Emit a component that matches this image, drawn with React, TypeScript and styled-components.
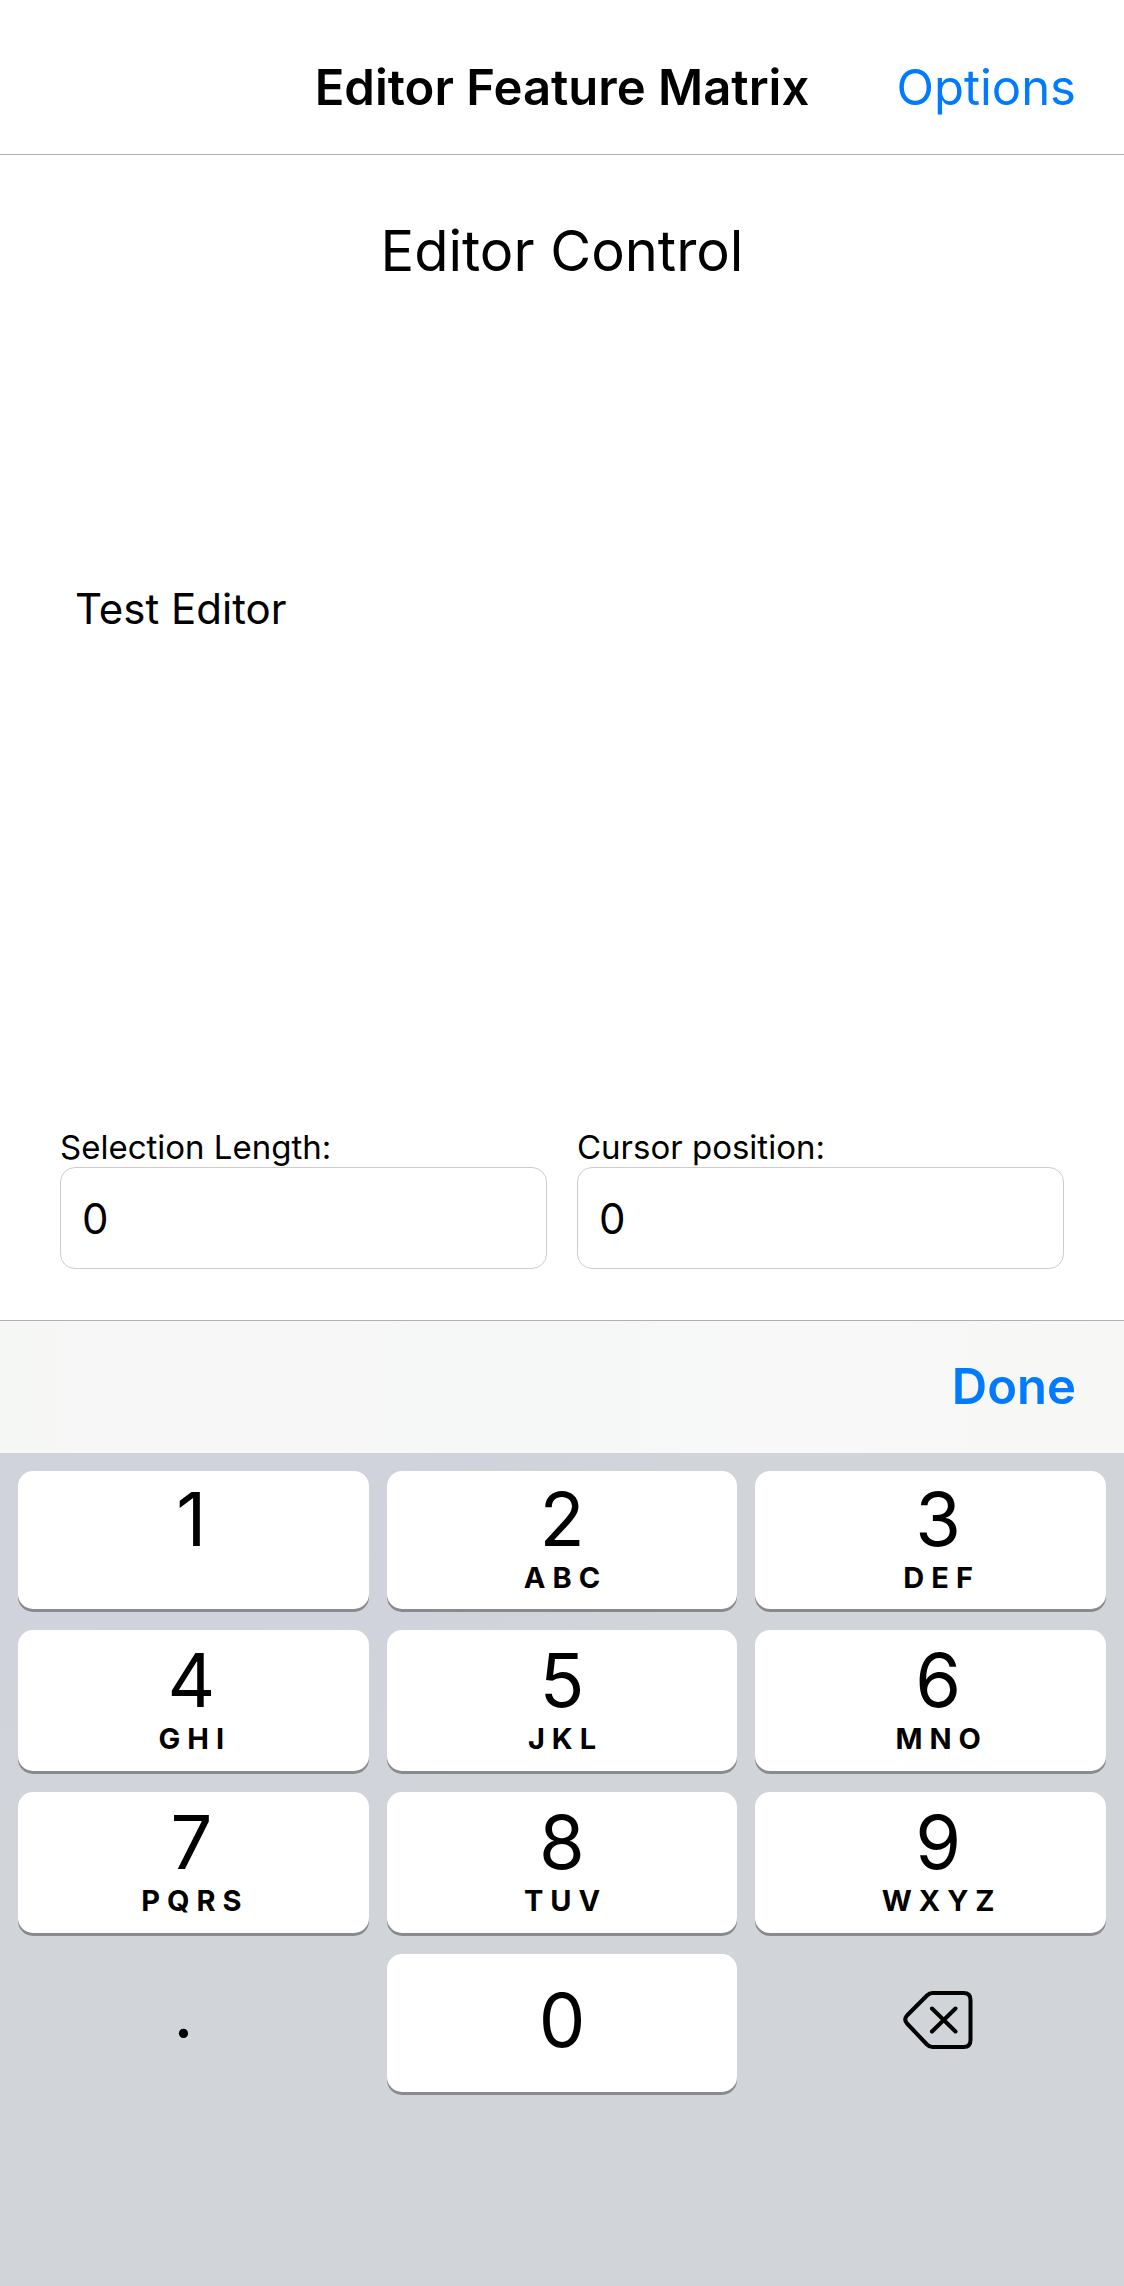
import React, { useState } from "react";
import styled, { createGlobalStyle } from "styled-components";

const GlobalStyle = createGlobalStyle`
  *, *::before, *::after { box-sizing: border-box; }
  body {
    margin: 0;
    background: #ffffff;
    color: #000000;
    font-family: Inter, "Liberation Sans", sans-serif;
  }
  button, input, textarea { font: inherit; color: inherit; }
`;

const Screen = styled.div`
  display: flex;
  flex-direction: column;
  min-height: 100vh;
`;

const NavBar = styled.header`
  display: grid;
  grid-template-columns: 1fr auto 1fr;
  align-items: center;
  padding: 25px 48px 3px;
  border-bottom: 1px solid #b2b2b2;
`;

const NavTitle = styled.h1`
  grid-column: 2;
  margin: 0;
  font-size: 49px;
  line-height: 126px;
  font-weight: 600;
`;

const BarButton = styled.button<{ $strong?: boolean }>`
  justify-self: end;
  padding: 0;
  border: 0;
  background: none;
  color: #007aff;
  font-size: 49px;
  line-height: 60px;
  font-weight: ${(p) => (p.$strong ? 600 : 400)};
  cursor: pointer;
`;

const Content = styled.main`
  flex: 1;
  display: flex;
  flex-direction: column;
  padding: 60px 60px 51px;
`;

const Heading = styled.h2`
  margin: 0;
  text-align: center;
  font-size: 56px;
  line-height: 72px;
  font-weight: 400;
`;

const Editor = styled.textarea`
  flex: 1;
  margin: 270px 0 60px;
  padding: 25px 15px;
  border: 0;
  outline: 0;
  resize: none;
  background: transparent;
  font-size: 42px;
  line-height: 54px;
`;

const Fields = styled.div`
  display: grid;
  grid-template-columns: 1fr 1fr;
  gap: 30px;
`;

const Field = styled.label`
  display: flex;
  flex-direction: column;
  font-size: 33px;
  line-height: 40px;
`;

const FieldInput = styled.input`
  width: 100%;
  height: 102px;
  padding: 0 21px;
  border: 1px solid #cccccc;
  border-radius: 15px;
  outline: 0;
  background: #ffffff;
  font-size: 42px;
`;

const Toolbar = styled.div`
  display: flex;
  justify-content: flex-end;
  align-items: center;
  height: 133px;
  padding: 0 48px;
  border-top: 1px solid #b0b0b0;
  background: linear-gradient(90deg, #f5f7f4, #f7f7f7 10%, #f7f7f7 30%, #f5f8f7 45%, #f8f8f8 70%, #f7f7f6);
`;

const Keypad = styled.div`
  display: grid;
  grid-template-columns: repeat(3, 1fr);
  grid-template-rows: 138px 141px 141px 138px;
  gap: 21px 18px;
  padding: 18px 18px 194px;
  background: radial-gradient(ellipse 46% 50% at 16% 0, #d0d3dc 40%, #d1d4d9 100%) #d1d4d9;
`;

const Key = styled.button<{ $plain?: boolean; $column: number }>`
  display: flex;
  flex-direction: column;
  align-items: center;
  justify-content: center;
  padding: 0 ${(p) => (p.$column === 0 ? 4 : 0)}px 6px ${(p) => (p.$column === 2 ? 15 : 0)}px;
  border: 0;
  border-radius: 15px;
  background: ${(p) => (p.$plain ? "transparent" : "#ffffff")};
  box-shadow: ${(p) => (p.$plain ? "none" : "0 3px 0 #898a8d")};
  cursor: pointer;
`;

const Digit = styled.span`
  font-size: 74px;
  line-height: 84px;
  font-weight: 400;
`;

const Point = styled.span`
  padding: 0 16px 10px 0;
  font-size: 64px;
  line-height: 72px;
  font-weight: 500;
`;

const Letters = styled.span`
  height: 36px;
  padding-left: 7px;
  font-size: 29px;
  line-height: 34px;
  font-weight: 700;
  letter-spacing: 7px;
`;

const DeleteGlyph = styled.svg`
  display: block;
  width: 70px;
  height: 60px;
`;

const KEYS = [
  ["1", ""], ["2", "ABC"], ["3", "DEF"],
  ["4", "GHI"], ["5", "JKL"], ["6", "MNO"],
  ["7", "PQRS"], ["8", "TUV"], ["9", "WXYZ"],
];

export default function App() {
  const [text, setText] = useState("Test Editor");
  const [selection, setSelection] = useState("0");
  const [cursor, setCursor] = useState("0");

  return (
    <>
      <GlobalStyle />
      <Screen>
        <NavBar>
          <NavTitle>Editor Feature Matrix</NavTitle>
          <BarButton type="button">Options</BarButton>
        </NavBar>
        <Content>
          <Heading>Editor Control</Heading>
          <Editor
            aria-label="Editor"
            spellCheck={false}
            value={text}
            onChange={(e) => setText(e.target.value)}
          />
          <Fields>
            <Field>
              Selection Length:
              <FieldInput inputMode="numeric" value={selection} onChange={(e) => setSelection(e.target.value)} />
            </Field>
            <Field>
              Cursor position:
              <FieldInput inputMode="numeric" value={cursor} onChange={(e) => setCursor(e.target.value)} />
            </Field>
          </Fields>
        </Content>
        <Toolbar>
          <BarButton type="button" $strong>Done</BarButton>
        </Toolbar>
        <Keypad>
          {KEYS.map(([digit, letters], i) => (
            <Key key={digit} type="button" $column={i % 3}>
              <Digit>{digit}</Digit>
              <Letters>{letters}</Letters>
            </Key>
          ))}
          <Key type="button" $plain $column={0}>
            <Point>.</Point>
          </Key>
          <Key type="button" $column={1}>
            <Digit>0</Digit>
          </Key>
          <Key type="button" $plain $column={2} aria-label="Delete">
            <DeleteGlyph viewBox="0 0 70 60" fill="none" stroke="#000" strokeWidth="4" strokeLinecap="round" strokeLinejoin="round">
              <path d="M29.500 3H60.500Q67.500 3 67.500 10V50Q67.500 57 60.500 57H29.500Q26.500 57 24 54.500L4 33.500Q0.500 29.500 4 25.500L24 5.500Q26.500 3 29.500 3Z" />
              <path d="M29 18.500L52.500 41.500M52.500 18.500L29 41.500" />
            </DeleteGlyph>
          </Key>
        </Keypad>
      </Screen>
    </>
  );
}
